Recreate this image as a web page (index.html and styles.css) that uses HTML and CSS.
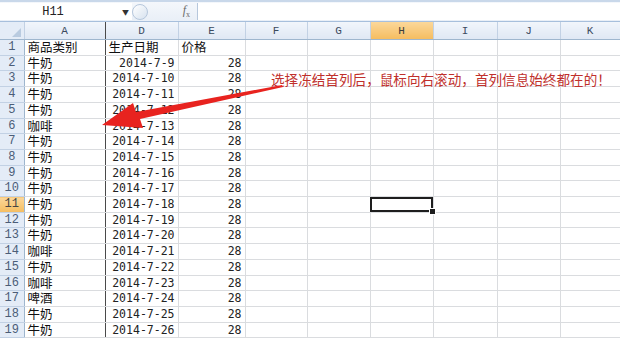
FILE: index.html
```html
<!DOCTYPE html>
<html lang="zh-CN">
<head>
  <meta charset="UTF-8" />
  <title>冻结首列</title>
  <link rel="stylesheet" href="styles.css">
</head>
<body>

  <div id="formula-bar">
    <div class="name-box">
      <span class="cell-ref">H11</span>
      <span class="drop">&#9660;</span>
    </div>
    <div class="grip"></div>
    <div class="fx"><i>f</i><sub>x</sub></div>
    <div class="formula-input"></div>
  </div>

  <div id="sheet">
    <table class="grid">
      <colgroup>
        <col class="c-head">
        <col class="c-a">
        <col class="c-d">
        <col class="c-e">
        <col class="c-f">
        <col class="c-g">
        <col class="c-h">
        <col class="c-i">
        <col class="c-j">
        <col class="c-k">
      </colgroup>
      <thead>
        <tr>
          <th class="corner"><span class="tri"></span></th>
          <th class="freeze">A</th><th>D</th><th>E</th><th>F</th><th>G</th>
          <th class="active">H</th><th>I</th><th>J</th><th>K</th>
        </tr>
      </thead>
      <tbody id="rows"></tbody>
    </table>

    <!-- the note and arrow drawn over the sheet -->
    <div class="note">选择冻结首列后，鼠标向右滚动，首列信息始终都在的！</div>
    <svg class="arrow" width="300" height="60" viewBox="0 0 300 60">
      <polygon points="282,0 283,2 140,34 143,43 102,40 133,18 136,27" fill="#e8231f"/>
    </svg>
  </div>

  <script>
    const data = [
      ["商品类别", "生产日期", "价格"],
      ["牛奶", "2014-7-9", 28],
      ["牛奶", "2014-7-10", 28],
      ["牛奶", "2014-7-11", 28],
      ["牛奶", "2014-7-12", 28],
      ["咖啡", "2014-7-13", 28],
      ["牛奶", "2014-7-14", 28],
      ["牛奶", "2014-7-15", 28],
      ["牛奶", "2014-7-16", 28],
      ["牛奶", "2014-7-17", 28],
      ["牛奶", "2014-7-18", 28],
      ["牛奶", "2014-7-19", 28],
      ["牛奶", "2014-7-20", 28],
      ["咖啡", "2014-7-21", 28],
      ["牛奶", "2014-7-22", 28],
      ["咖啡", "2014-7-23", 28],
      ["啤酒", "2014-7-24", 28],
      ["牛奶", "2014-7-25", 28],
      ["牛奶", "2014-7-26", 28]
    ];

    const body = document.getElementById("rows");

    data.forEach((row, i) => {
      const n = i + 1;
      const tr = document.createElement("tr");
      const head = n === 11 ? ' class="rh active"' : ' class="rh"';
      const isTitle = n === 1;
      tr.innerHTML =
        "<th" + head + ">" + n + "</th>" +
        '<td class="freeze">' + row[0] + "</td>" +
        '<td class="' + (isTitle ? "title" : "num") + '">' + row[1] + "</td>" +
        '<td class="' + (isTitle ? "title" : "num") + '">' + row[2] + "</td>" +
        "<td></td><td></td>" +
        (n === 11 ? '<td class="selected"><span class="handle"></span></td>' : "<td></td>") +
        "<td></td><td></td><td></td>";
      body.appendChild(tr);
    });
  </script>
</body>
</html>
```

FILE: styles.css
```css
body {
  margin: 0;
  width: 620px;
  height: 338px;
  overflow: hidden;
  background-color: #ffffff;
  font-family: "Noto Sans CJK SC", sans-serif;
}

#formula-bar {
  display: flex;
  align-items: center;
  height: 19px;
  border-top: 2px solid #c9d8ea;
  border-bottom: 1px solid #a7bfdc;
  background: linear-gradient(#f4f7fb, #e9eff7);
}

.name-box {
  width: 132px;
  height: 17px;
  display: flex;
  align-items: center;
  background-color: #ffffff;
}

.cell-ref {
  flex: 1;
  text-align: center;
  padding-right: 16px;
  font-family: "Liberation Mono", monospace;
  font-size: 12px;
  color: #222;
}

.drop {
  font-size: 7px;
  color: #333;
  width: 10px;
}

.grip {
  width: 14px;
  height: 14px;
  border-radius: 50%;
  border: 1px solid #b6c7dc;
  background: linear-gradient(135deg, #ffffff, #d7e2ef);
}

.fx {
  width: 42px;
  text-align: right;
  padding-right: 4px;
  font-family: "Liberation Serif", serif;
  font-size: 12px;
  color: #6a6a6a;
}

.fx sub {
  font-size: 8px;
}

.formula-input {
  flex: 1;
  height: 17px;
  margin-left: 3px;
  background-color: #ffffff;
  border-left: 1px solid #b6c7dc;
}

#sheet {
  position: relative;
}

.grid {
  border-collapse: collapse;
  table-layout: fixed;
  width: 620px;
}

.c-head { width: 24px; }
.c-a { width: 81px; }
.c-d { width: 73px; }
.c-e { width: 67px; }
.c-f { width: 62px; }
.c-g { width: 63px; }
.c-h { width: 63px; }
.c-i { width: 64px; }
.c-j { width: 63px; }
.c-k { width: 60px; }

.grid thead th {
  height: 17px;
  padding: 0;
  font-family: "Liberation Mono", monospace;
  font-weight: normal;
  font-size: 11px;
  color: #3b4a5e;
  background: linear-gradient(#f1f5fb, #dfe8f4);
  border-right: 1px solid #c2d1e4;
  border-bottom: 1px solid #9eb6ce;
}

.grid thead th.active {
  background: linear-gradient(#fbd79a, #f5bd60);
  color: #3b3b3b;
}

.grid thead th.corner {
  position: relative;
  background: #e4ecf7;
}

.tri {
  position: absolute;
  right: 3px;
  bottom: 2px;
  width: 0;
  height: 0;
  border-left: 9px solid transparent;
  border-bottom: 9px solid #b9cbe0;
}

.grid tbody tr {
  height: 15.7px;
}

.grid td {
  padding: 0 3px;
  height: 14.7px;
  line-height: 14.7px;
  font-size: 12.5px;
  color: #111;
  border-right: 1px solid #dadcdf;
  border-bottom: 1px solid #dadcdf;
  white-space: nowrap;
}

.grid th.rh {
  padding: 0;
  line-height: 14.7px;
  font-family: "Liberation Mono", monospace;
  font-weight: normal;
  font-size: 12px;
  color: #4b5d77;
  background-color: #e4ecf7;
  border-right: 1px solid #9eb6ce;
  border-bottom: 1px solid #c2d1e4;
}

.grid th.rh.active {
  background: linear-gradient(#fbd79a, #f5bd60);
  color: #444;
}

.grid td.freeze,
.grid thead th.freeze {
  border-right: 1px solid #4a4a4a;
}

.grid td.num {
  text-align: right;
  padding-right: 3px;
  font-family: "DejaVu Sans Mono", monospace;
  font-size: 11.5px;
  color: #222;
}

.grid td.title {
  text-align: left;
}

.grid td.selected {
  position: relative;
  outline: 2px solid #1e1e1e;
  outline-offset: -2px;
}

.handle {
  position: absolute;
  right: -3px;
  bottom: -3px;
  width: 5px;
  height: 5px;
  background-color: #1e1e1e;
  border: 1px solid #ffffff;
}

.note {
  position: absolute;
  left: 271px;
  top: 48px;
  font-size: 13.6px;
  line-height: 18px;
  color: #c0302c;
  white-space: nowrap;
}

.arrow {
  position: absolute;
  left: 0;
  top: 63px;
}
```
